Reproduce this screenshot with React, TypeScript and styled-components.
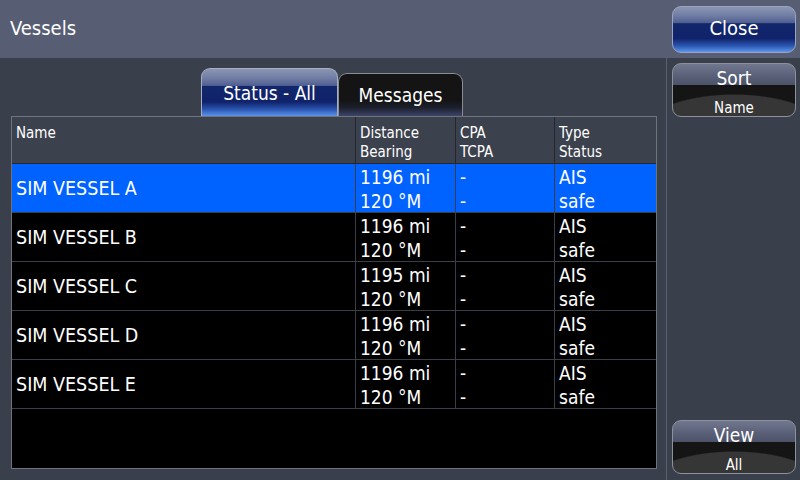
import styled, { createGlobalStyle } from 'styled-components';

const GlobalStyle = createGlobalStyle`
    html, body {
        margin: 0;
        padding: 0;
        background: #3a3f4c;
    }
    body {
        font-family: "DejaVu Sans Condensed", "DejaVu Sans", sans-serif;
        font-stretch: condensed;
        color: #ffffff;
    }
`;

const Screen = styled.div`
    width: 800px;
    height: 480px;
    display: flex;
    flex-direction: column;
    overflow: hidden;
    background: #3a3f4c;
`;

const Header = styled.div`
    height: 58px;
    flex: none;
    display: flex;
    align-items: center;
    justify-content: space-between;
    padding: 0 4px 1px 10px;
    box-sizing: border-box;
    background: #575e73;
`;

const Title = styled.div`
    font-size: 20px;
    padding-bottom: 2px;
`;

const blueGlass = `
    background: linear-gradient(
        to bottom,
        #8c95b3 0%,
        #6f7ca3 20%,
        #4f5f92 35%,
        #12266c 37%,
        #10236a 70%,
        #2a55b0 86%,
        #5b95ea 100%
    );
`;

const CloseButton = styled.button`
    width: 124px;
    height: 47px;
    margin-top: 1px;
    border: 1px solid #9aa3c0;
    border-radius: 9px;
    ${blueGlass}
    color: #fff;
    font: inherit;
    font-size: 20px;
    padding: 0 0 3px;
    cursor: pointer;
`;

const Body = styled.div`
    flex: 1;
    display: flex;
    min-height: 0;
`;

const Main = styled.div`
    flex: 1;
    display: flex;
    flex-direction: column;
    padding: 10px 9px 11px 11px;
    min-width: 0;
`;

const Tabs = styled.div`
    display: flex;
    align-items: flex-end;
    padding-left: 190px;
    height: 48px;
    flex: none;
`;

const Tab = styled.div<{ $active?: boolean }>`
    height: ${p => (p.$active ? 48 : 43)}px;
    width: ${p => (p.$active ? 137 : 125)}px;
    box-sizing: border-box;
    display: flex;
    align-items: center;
    justify-content: center;
    border: 1px solid ${p => (p.$active ? '#a7aec4' : '#8a8c92')};
    border-bottom: none;
    border-radius: 9px 9px 0 0;
    font-size: 19px;
    ${p =>
        p.$active
            ? blueGlass
            : `background: linear-gradient(to bottom, #141414 0%, #141414 62%, #1c1f2c 80%, #3c4468 100%);`}
`;

const Table = styled.div`
    flex: 1;
    display: flex;
    flex-direction: column;
    border: 1px solid #6f737e;
    background: #000;
`;

const Row = styled.div<{ $head?: boolean; $selected?: boolean }>`
    display: grid;
    grid-template-columns: 344px 100px 99px 1fr;
    height: ${p => (p.$head ? 46 : 48)}px;
    border-bottom: 1px solid ${p => (p.$head ? '#24272f' : '#3a3e48')};
    background: ${p => (p.$head ? '#3c414e' : p.$selected ? '#0062ff' : '#000')};
    flex: none;
`;

const Cell = styled.div<{ $head?: boolean; $name?: boolean }>`
    padding: ${p => (p.$head ? '7px 4px 0' : '1px 4px 0')};
    border-right: 1px solid ${p => (p.$head ? '#24272f' : '#3a3e48')};
    font-size: ${p => (p.$head ? 15 : p.$name ? 19.5 : 19)}px;
    line-height: ${p => (p.$head ? 19 : 24)}px;
    display: flex;
    flex-direction: column;
    justify-content: ${p => (p.$name ? 'center' : 'flex-start')};
    white-space: nowrap;
    overflow: hidden;
    &:last-child {
        border-right: none;
    }
`;

const Side = styled.div`
    width: 124px;
    flex: none;
    border-left: 1px solid #5a6073;
    padding: 5px 4px 6px 5px;
    display: flex;
    flex-direction: column;
    justify-content: space-between;
`;

const MenuButton = styled.div`
    height: 54px;
    box-sizing: border-box;
    border: 1px solid #8d919c;
    border-radius: 9px;
    display: flex;
    flex-direction: column;
    align-items: center;
    background:
        radial-gradient(ellipse 96px 40px at 50% calc(100% + 18px), #363636 97%, transparent 100%),
        linear-gradient(to bottom, #71778e 0px, #5a6077 12px, #4c5268 21px, #151515 21px, #151515 100%);
`;

const MenuLabel = styled.span`
    font-size: 19px;
    line-height: 22px;
    margin-top: 3px;
`;

const MenuValue = styled.span`
    font-size: 15px;
    line-height: 18px;
    margin-top: 10px;
`;

type Vessel = {
    name: string;
    distance: string;
    bearing: string;
    cpa: string;
    tcpa: string;
    type: string;
    status: string;
};

const vessels: Vessel[] = [
    { name: 'SIM VESSEL A', distance: '1196 mi', bearing: '120 °M', cpa: '-', tcpa: '-', type: 'AIS', status: 'safe' },
    { name: 'SIM VESSEL B', distance: '1196 mi', bearing: '120 °M', cpa: '-', tcpa: '-', type: 'AIS', status: 'safe' },
    { name: 'SIM VESSEL C', distance: '1195 mi', bearing: '120 °M', cpa: '-', tcpa: '-', type: 'AIS', status: 'safe' },
    { name: 'SIM VESSEL D', distance: '1196 mi', bearing: '120 °M', cpa: '-', tcpa: '-', type: 'AIS', status: 'safe' },
    { name: 'SIM VESSEL E', distance: '1196 mi', bearing: '120 °M', cpa: '-', tcpa: '-', type: 'AIS', status: 'safe' },
];

export const App = () => {
    return (
        <Screen>
            <GlobalStyle />
            <Header>
                <Title>Vessels</Title>
                <CloseButton>Close</CloseButton>
            </Header>
            <Body>
                <Main>
                    <Tabs>
                        <Tab $active>Status - All</Tab>
                        <Tab>Messages</Tab>
                    </Tabs>
                    <Table>
                        <Row $head>
                            <Cell $head>Name</Cell>
                            <Cell $head>
                                <span>Distance</span>
                                <span>Bearing</span>
                            </Cell>
                            <Cell $head>
                                <span>CPA</span>
                                <span>TCPA</span>
                            </Cell>
                            <Cell $head>
                                <span>Type</span>
                                <span>Status</span>
                            </Cell>
                        </Row>
                        {vessels.map((v, i) => (
                            <Row key={v.name} $selected={i === 0}>
                                <Cell $name>{v.name}</Cell>
                                <Cell>
                                    <span>{v.distance}</span>
                                    <span>{v.bearing}</span>
                                </Cell>
                                <Cell>
                                    <span>{v.cpa}</span>
                                    <span>{v.tcpa}</span>
                                </Cell>
                                <Cell>
                                    <span>{v.type}</span>
                                    <span>{v.status}</span>
                                </Cell>
                            </Row>
                        ))}
                    </Table>
                </Main>
                <Side>
                    <MenuButton>
                        <MenuLabel>Sort</MenuLabel>
                        <MenuValue>Name</MenuValue>
                    </MenuButton>
                    <MenuButton>
                        <MenuLabel>View</MenuLabel>
                        <MenuValue>All</MenuValue>
                    </MenuButton>
                </Side>
            </Body>
        </Screen>
    );
};

export default App;
